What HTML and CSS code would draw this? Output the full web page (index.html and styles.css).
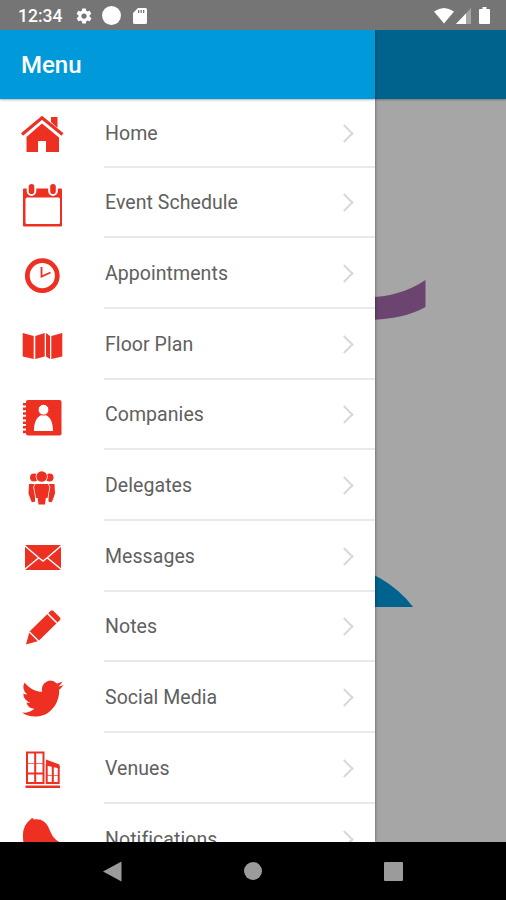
FILE: index.html
```html
<!DOCTYPE html>
<html lang="en">
<head>
  <meta charset="UTF-8" />
  <meta name="viewport" content="width=device-width, initial-scale=1.0"/>
  <title>Menu</title>
  <link rel="stylesheet" href="styles.css">
</head>
<body>

  <div class="status-bar">
    <span class="time">12:34</span>
    <svg class="gear" width="18" height="18" viewBox="0 0 24 24"><path d="M19.4 13c0-.3.1-.6.1-1s0-.7-.1-1l2.1-1.6c.2-.2.3-.4.1-.7l-2-3.4c-.1-.2-.4-.3-.6-.2l-2.5 1c-.5-.4-1.1-.7-1.7-1L14.5 2.4c0-.2-.3-.4-.5-.4h-4c-.2 0-.5.2-.5.4l-.4 2.7c-.6.2-1.1.6-1.7 1l-2.5-1c-.2-.1-.5 0-.6.2l-2 3.4c-.1.2-.1.5.1.7L4.6 11c0 .3-.1.7-.1 1s0 .7.1 1l-2.1 1.6c-.2.2-.3.4-.1.7l2 3.4c.1.2.4.3.6.2l2.5-1c.5.4 1.1.7 1.7 1l.4 2.7c0 .2.2.4.5.4h4c.2 0 .5-.2.5-.4l.4-2.7c.6-.2 1.1-.6 1.7-1l2.5 1c.2.1.5 0 .6-.2l2-3.4c.1-.2.1-.5-.1-.7zM12 15.500a3.500 3.500 0 1 1 0-7 3.500 3.500 0 0 1 0 7z"/></svg>
    <span class="dot"></span>
    <svg width="14" height="16" viewBox="0 0 14 16"><path fill-rule="evenodd" d="M5 0h7.500a1.500 1.500 0 0 1 1.500 1.500v13a1.500 1.500 0 0 1-1.500 1.500h-11A1.500 1.500 0 0 1 0 14.500V5zM5 2v3h1.300V2zm2.500 0v3h1.300V2zm2.500 0v3h1.300V2z"/></svg>
    <div class="signals">
      <svg width="20" height="16" viewBox="0 0 20 16"><path d="M0 3.500Q10-3.500 20 3.500L10 15.500z"/></svg>
      <svg width="15" height="16" viewBox="0 0 15 16"><path opacity=".35" d="M15 0v16H0z"/><path d="M10 5.500V16H0z"/></svg>
      <svg width="11" height="17" viewBox="0 0 11 17"><path d="M3.500 0h4v2H10a1 1 0 0 1 1 1v13a1 1 0 0 1-1 1H1a1 1 0 0 1-1-1V3a1 1 0 0 1 1-1h2.500z"/></svg>
    </div>
  </div>

  <main class="screen">
    <div class="page">
      <div class="page-bar"></div>
      <svg class="page-logo" width="506" height="743" viewBox="0 0 506 743">
        <path fill="#a669ad" d="M330 193C364 202 397 200 425.500 181V208C400 222 362 225 330 214z"/>
        <path fill="#0099d9" d="M330 460Q388 474 413 508H330z"/>
      </svg>
    </div>
    <div class="scrim"></div>

    <nav class="drawer">
      <header class="drawer-header"><h1>Menu</h1></header>
      <ul class="menu">
        <li>
          <svg class="icon" viewBox="0 0 48 48"><path d="M33 8h6.500v11L33 13z"/><path d="M24 14.500L41 28.500V43H28V32h-8v11H8.500V28z"/><path class="cut" d="M5 27.500L24 11.500l19 16"/><path class="line" stroke-width="3.200" d="M4 25.500L24 8.800l20.500 16.700"/></svg>
          <a href="#">Home</a>
        </li>
        <li>
          <svg class="icon" viewBox="0 0 48 48"><path fill-rule="evenodd" d="M6 9.500h37a1 1 0 0 1 1 1V46.500a1 1 0 0 1-1 1H6a1 1 0 0 1-1-1V10.500a1 1 0 0 1 1-1zM9 18.500a1.500 1.500 0 0 0-1.500 1.500v23.500A1.500 1.500 0 0 0 9 45h31.500a1.500 1.500 0 0 0 1.500-1.500V20a1.500 1.500 0 0 0-1.500-1.500z"/><rect class="gap wide" x="10.700" y="5" width="5.600" height="10" rx="2.800"/><rect class="gap wide" x="32.200" y="5" width="5.600" height="10" rx="2.800"/></svg>
          <a href="#">Event Schedule</a>
        </li>
        <li>
          <svg class="icon" viewBox="0 0 48 48"><circle class="line" cx="24.300" cy="25.700" r="15" stroke-width="4.800"/><path class="line" stroke-width="1.800" d="M23.500 17v9.500l9-4"/></svg>
          <a href="#">Appointments</a>
        </li>
        <li>
          <svg class="icon" viewBox="0 0 48 48"><path d="M4.700 13l11 3v23l-11-2.500zM17.300 16l9.400-3v23.500l-9.400 2.500zM28 13l4 3v23l-4-2.500zM33.300 16l11-3v23.500l-11 2.500z"/></svg>
          <a href="#">Floor Plan</a>
        </li>
        <li>
          <svg class="icon" viewBox="0 0 48 48"><rect x="8" y="9" width="35.500" height="35.500" rx="2"/><path class="line" stroke-width="4" stroke-dasharray="2.600 2" d="M7 12v31"/><path fill="#fff" d="M16 40c0-8.500 2.500-13 6-15.200 2-1.300 5-1.300 7 0 3.500 2.200 6 6.700 6 15.200z"/><circle class="head" cx="25.500" cy="18.700" r="5.400"/></svg>
          <a href="#">Companies</a>
        </li>
        <li>
          <svg class="icon" viewBox="0 0 48 48"><circle cx="16" cy="15.500" r="4"/><circle cx="31.500" cy="15.500" r="4"/><path d="M11 22h6v17.500q-3.500 2-4-1l-2.500-7zM30.500 22h6l.5 9.500-2.500 7q-.5 3-4 1z"/><path class="gap" d="M17.500 22H30l1.500 3-2 11h-1.700L27 42.500h-6.500l-.8-6.500H18l-2-11z"/><circle class="gap" cx="23.700" cy="14.500" r="5.300"/></svg>
          <a href="#">Delegates</a>
        </li>
        <li>
          <svg class="icon" viewBox="0 0 48 48"><rect x="7" y="13" width="36" height="25" rx="1"/><path class="cut" d="M6.500 13.500L21 26l4 3 4-3 14.500-12.500M6.500 37.500L20.500 26M43.500 37.500L29.500 26"/></svg>
          <a href="#">Messages</a>
        </li>
        <li>
          <svg class="icon" viewBox="0 0 48 48"><path d="M8 41.500l3.500-13L32.500 8q1.500-1.500 3 0l6.500 6.500q1.200 1.300 0 2.500L20.500 38z"/><path class="cut" d="M11.500 29l9.500 9.500M29.500 10.500l9.500 9.500"/></svg>
          <a href="#">Notes</a>
        </li>
        <li>
          <svg class="icon" viewBox="0 0 48 48"><path transform="translate(3.700 2.600) scale(1.740 1.840)" d="M23.950 4.570a10 10 0 0 1-2.820.78 4.960 4.960 0 0 0 2.160-2.720c-.95.55-2 .95-3.130 1.180a4.920 4.920 0 0 0-8.380 4.480C7.690 8.090 4.070 6.130 1.640 3.160a4.930 4.930 0 0 0 1.520 6.570 4.900 4.900 0 0 1-2.230-.61v.06c0 2.390 1.700 4.380 3.950 4.830a5 5 0 0 1-2.210.08 4.940 4.940 0 0 0 4.600 3.420A9.870 9.870 0 0 1 0 19.540a13.990 13.990 0 0 0 7.550 2.210c9.050 0 14-7.500 14-13.980 0-.21 0-.42-.02-.63a9.940 9.940 0 0 0 2.460-2.550z"/></svg>
          <a href="#">Social Media</a>
        </li>
        <li>
          <svg class="icon" viewBox="0 0 48 48"><path d="M7.500 41.500H42V44H7.500zM28 15.500l13.500 5v4L28 21.500z"/><path class="line" stroke-width="2" d="M9 8.500h16.500v30.500H9zM17.200 8.500v31M28.700 20v19h12V22M34.800 22v17"/><path class="line" stroke-width="2" d="M9 29.500h16.500"/><path class="line" stroke-width="1.200" opacity=".7" d="M9 19.500h16.500M28.700 31.500h12"/></svg>
          <a href="#">Venues</a>
        </li>
        <li>
          <svg class="icon" viewBox="0 0 48 48"><path d="M12.500 4.500Q14 1.500 16 4.500C24 3.500 28 7 31 13.500S35 24 42.500 27.500V34L8 42Q5.500 34 5 22 4.500 10 12.500 4.500z"/></svg>
          <a href="#">Notifications</a>
        </li>
      </ul>
    </nav>
  </main>

  <footer class="nav-bar">
    <svg width="19" height="21" viewBox="0 0 19 21"><path d="M18.500.5v20L0 10.500z"/></svg>
    <span class="home-btn"></span>
    <span class="recent-btn"></span>
  </footer>

</body>
</html>
```
FILE: styles.css
```css
* {
  box-sizing: border-box;
}

body {
  margin: 0;
  height: 900px;
  display: flex;
  flex-direction: column;
  overflow: hidden;
  font-family: Roboto, "Liberation Sans", sans-serif;
  background: #000;
}

svg {
  display: block;
  flex-shrink: 0;
}

.status-bar {
  height: 30px;
  padding: 1px 16px 0 18px;
  display: flex;
  align-items: center;
  background: #757575;
  color: #fff;
  fill: #fff;
}

.time {
  width: 57px;
  font-size: 17.5px;
  font-weight: 500;
}

.dot {
  width: 19px;
  height: 19px;
  margin: 0 12px 0 9px;
  border-radius: 50%;
  background: #fff;
}

.signals {
  display: flex;
  align-items: center;
  margin-left: auto;
}

.signals svg:nth-child(2) {
  margin: 0 8px 0 2px;
}

.screen {
  position: relative;
  height: 812px;
  overflow: hidden;
}

.page {
  height: 100%;
  background: #fff;
}

.page-bar {
  height: 69px;
  background: #0099d9;
  box-shadow: 0 1px 2px rgba(0, 0, 0, 0.3);
}

.scrim {
  position: absolute;
  inset: 0;
  background: rgba(0, 0, 0, 0.35);
}

.drawer {
  position: absolute;
  top: 0;
  left: 0;
  width: 375px;
  height: 100%;
  overflow: hidden;
  background: #fff;
  box-shadow: 0 0 3px rgba(0, 0, 0, 0.5);
}

.drawer-header {
  height: 68.5px;
  padding: 1px 21px 0;
  display: flex;
  align-items: center;
  background: #0099d9;
  box-shadow: 0 1px 2px rgba(0, 0, 0, 0.3);
}

.drawer-header h1 {
  margin: 0;
  font-size: 24px;
  font-weight: 500;
  color: #fff;
}

.menu {
  margin: 0;
  padding: 0;
  list-style: none;
}

.menu li {
  height: 70.7px;
  padding-left: 18px;
  display: flex;
  align-items: center;
}

.menu li:first-child {
  height: 69px;
}

.icon {
  width: 48px;
  height: 48px;
  margin-right: 38px;
  fill: #ee3023;
}

.icon .line {
  fill: none;
  stroke: #ee3023;
}

.icon .gap {
  stroke: #fff;
  stroke-width: 1.5;
  paint-order: stroke;
}

.icon .wide {
  stroke-width: 4;
}

.icon .cut {
  fill: none;
  stroke: #fff;
  stroke-width: 1.5;
}

.icon .head {
  fill: #fff;
  stroke: #ee3023;
  stroke-width: 1;
}

.menu a {
  flex: 1;
  height: 100%;
  padding: 2px 24px 0 1px;
  display: flex;
  align-items: center;
  justify-content: space-between;
  border-bottom: 2px solid #e9e9e9;
  font-size: 19.5px;
  letter-spacing: 0.06px;
  color: #606060;
  text-decoration: none;
}

.menu a::after {
  content: "";
  width: 11px;
  height: 11px;
  border: solid #d8d8d8;
  border-width: 2px 2px 0 0;
  transform: rotate(45deg);
}

.nav-bar {
  height: 58px;
  padding: 0 103px;
  display: flex;
  align-items: center;
  justify-content: space-between;
  background: #000;
  fill: #9b9b9b;
}

.home-btn {
  width: 18px;
  height: 18px;
  border-radius: 50%;
  background: #9b9b9b;
}

.recent-btn {
  width: 19px;
  height: 19px;
  border-radius: 1px;
  background: #9b9b9b;
}
```
